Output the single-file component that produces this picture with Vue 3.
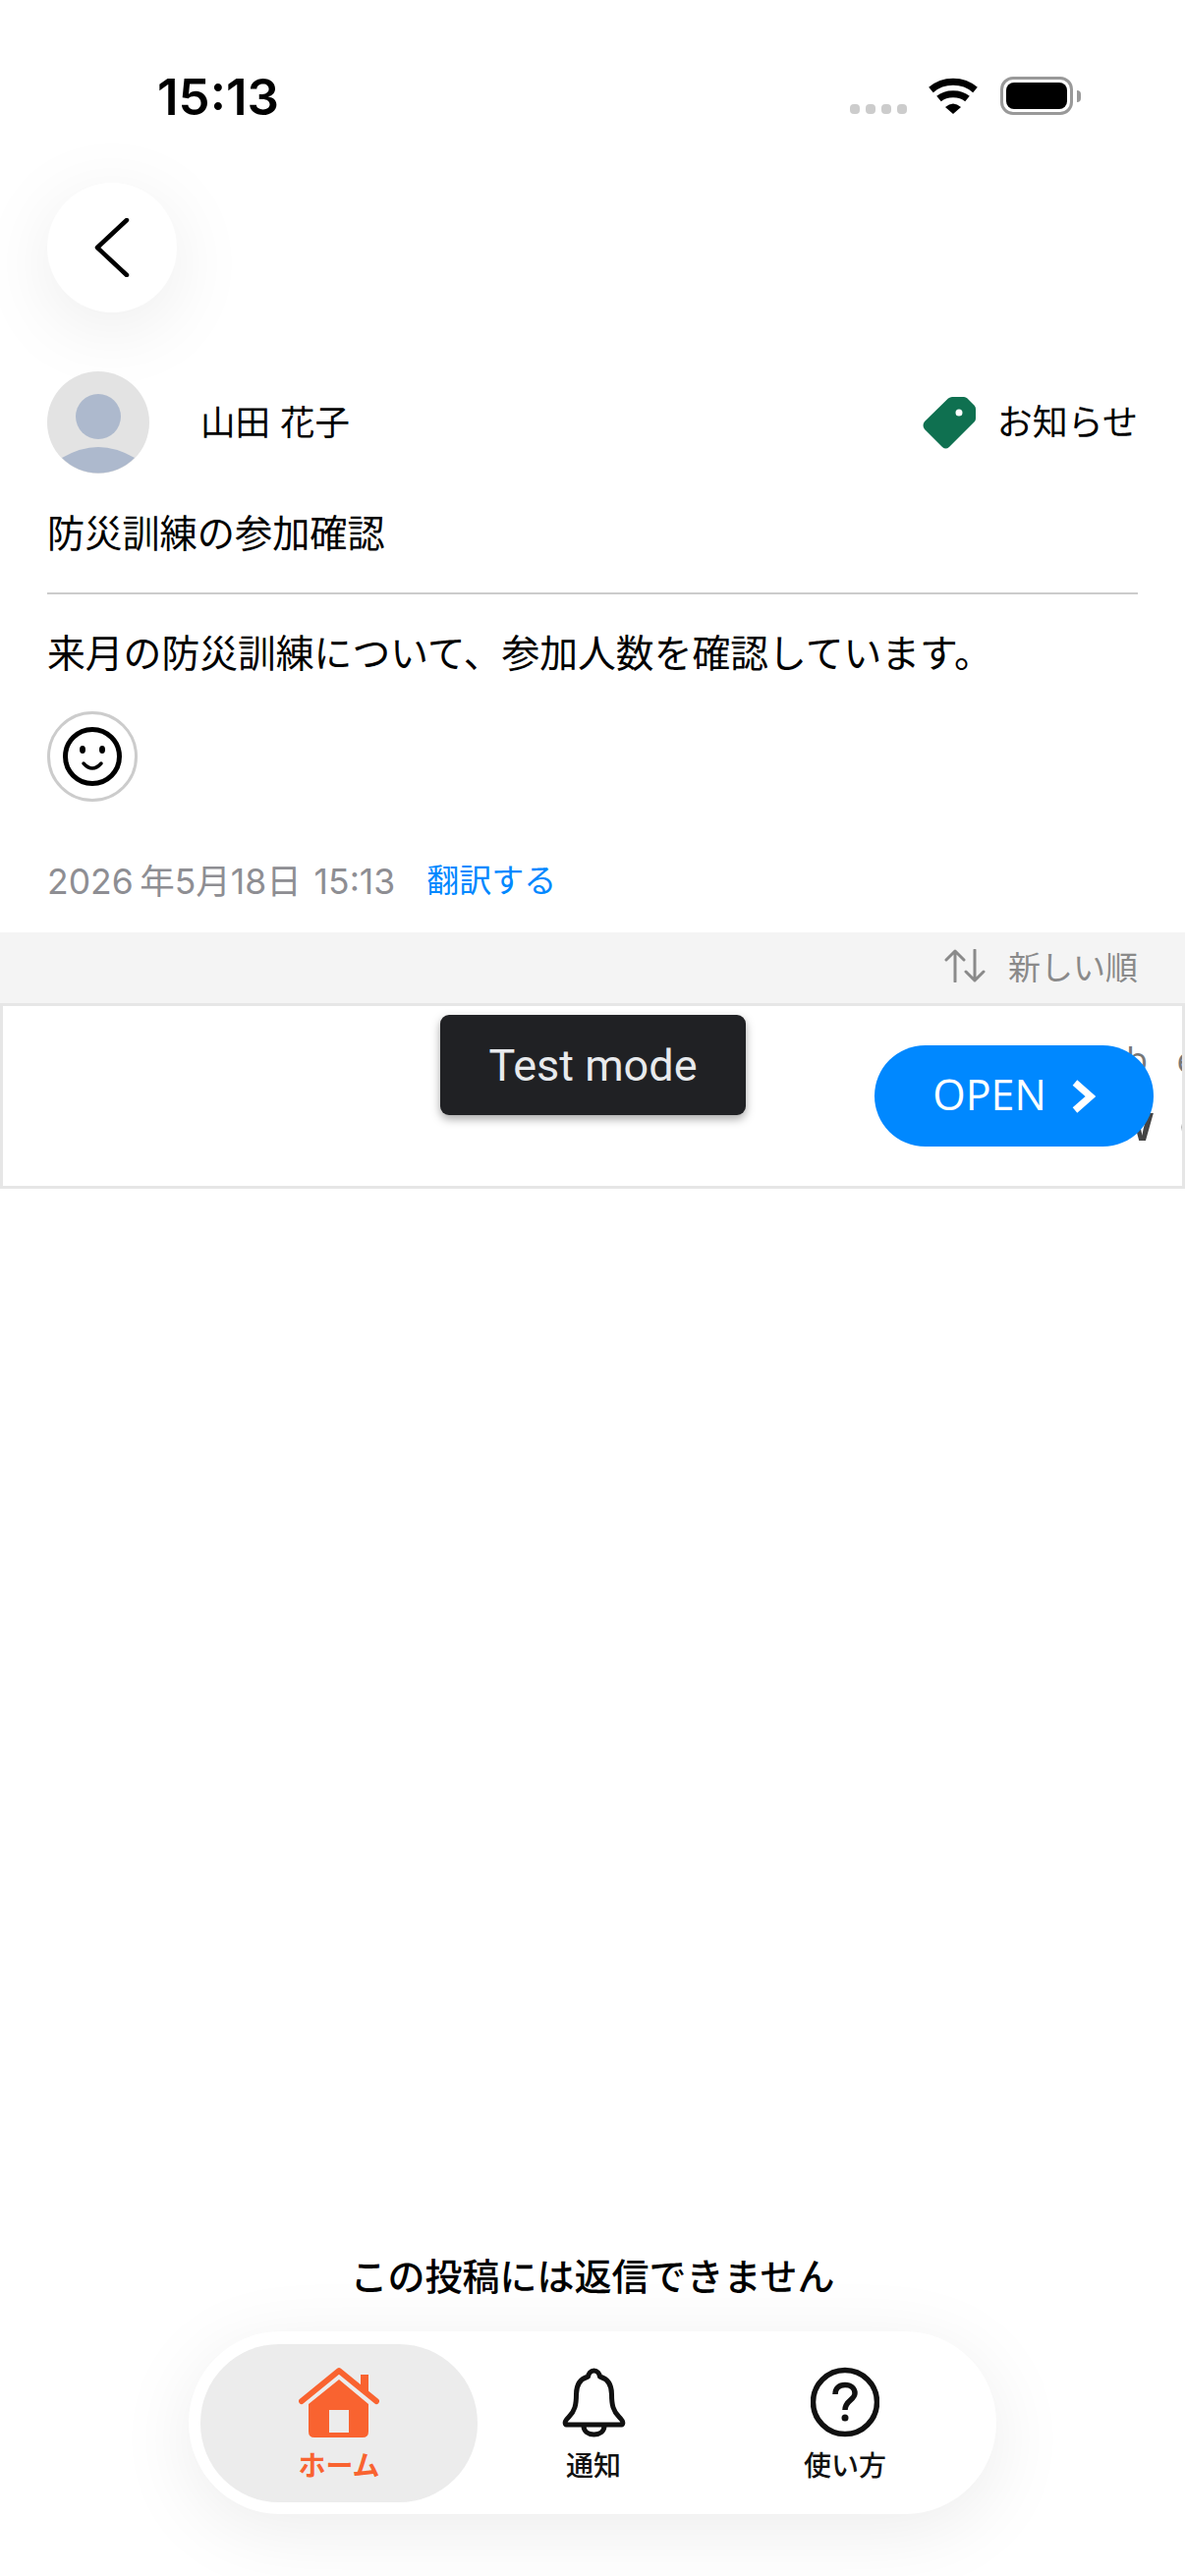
<script setup>
const navItems = [
  { key: 'home', label: 'ホーム', active: true },
  { key: 'bell', label: '通知', active: false },
  { key: 'help', label: '使い方', active: false },
]
</script>

<template>
  <div class="page">
    <div class="status-bar">
      <span class="time">15:13</span>
      <div class="status-icons">
        <div class="signal"><i></i><i></i><i></i><i></i></div>
        <svg class="wifi" width="50" height="37" viewBox="0 0 50 37">
          <path d="M2.500 12.500C15 1.500 35 1.500 47.500 12.500" fill="none" stroke="#000" stroke-width="7" />
          <path d="M10.500 21.500C18 15 32 15 39.500 21.500" fill="none" stroke="#000" stroke-width="7" />
          <path d="M17 30Q25 23 33 30L25 37Z" fill="#000" />
        </svg>
        <div class="battery"><div class="battery-fill"></div></div>
        <div class="battery-nub"></div>
      </div>
    </div>

    <button class="back">
      <svg width="36" height="60" viewBox="0 0 36 60">
        <path d="M33 2L3 30L33 58" fill="none" stroke="#000" stroke-width="4.500" stroke-linecap="round" stroke-linejoin="round" />
      </svg>
    </button>

    <div class="post-head">
      <div class="avatar">
        <svg width="104" height="104" viewBox="0 0 104 104">
          <circle cx="52" cy="52" r="52" fill="#e3e3e3" />
          <circle cx="52" cy="46" r="23" fill="#adb9cd" />
          <path d="M15 88Q34 77 52 77Q70 77 89 88A52 52 0 0 1 15 88Z" fill="#adb9cd" />
        </svg>
      </div>
      <span class="name">山田 花子</span>
      <div class="category">
        <svg width="54" height="54" viewBox="0 0 54 54">
          <path fill-rule="evenodd" fill="#0f7050" d="M2 26L26 2.500Q28 1 30 1L42 1Q44 1 45.500 2.500L52.500 9.500Q54 11 54 13L54 23Q54 25 52.500 26.500L27 52Q23.500 55 20 52L2 34Q-1 30 2 26ZM37 13.500A3.500 3.500 0 1 0 37 20.500A3.500 3.500 0 1 0 37 13.500Z" />
        </svg>
        <span>お知らせ</span>
      </div>
    </div>

    <h1 class="title">防災訓練の参加確認</h1>
    <div class="divider"></div>
    <p class="body">来月の防災訓練について、参加人数を確認しています。</p>

    <div class="reaction">
      <svg width="60" height="60" viewBox="0 0 60 60">
        <circle cx="30" cy="30" r="27.500" fill="none" stroke="#000" stroke-width="5" />
        <ellipse cx="20" cy="23" rx="3" ry="4" fill="#000" />
        <ellipse cx="40" cy="23" rx="3" ry="4" fill="#000" />
        <path d="M21 37Q30 47 39 37" fill="none" stroke="#000" stroke-width="3.500" stroke-linecap="round" />
      </svg>
    </div>

    <div class="meta">
      <span class="date">2026&#8201;年5月18日 15:13</span>
      <span class="translate">翻訳する</span>
    </div>

    <div class="sort-bar">
      <svg width="42" height="34" viewBox="0 0 42 34">
        <path d="M11 33V2M2 11L11 2L20 11M31 1V32M22 23L31 32L40 23" fill="none" stroke="#8a8a8a" stroke-width="3" stroke-linecap="round" stroke-linejoin="round" />
      </svg>
      <span>新しい順</span>
    </div>

    <div class="ad">
      <div class="ad-peek">
        <span class="peek-top">b e</span>
        <span class="peek-bottom">w c</span>
      </div>
      <div class="test-mode">Test mode</div>
      <div class="open">
        <span>OPEN</span>
        <svg width="24" height="34" viewBox="0 0 24 34">
          <path d="M3 3L19 17L3 31" fill="none" stroke="#fff" stroke-width="7" />
        </svg>
      </div>
    </div>

    <div class="spacer"></div>

    <div class="footer">
      <p class="no-reply">この投稿には返信できません</p>
      <nav class="tabs">
        <div v-for="item in navItems" :key="item.key" :class="['tab', { active: item.active }]">
          <svg v-if="item.key === 'home'" width="82" height="72" viewBox="0 0 82 72">
            <rect x="63" y="8" width="8" height="18" fill="#f96330" />
            <path d="M3 35L41 4L79 35" fill="none" stroke="#f96330" stroke-width="6" stroke-linecap="round" stroke-linejoin="round" />
            <path fill-rule="evenodd" fill="#f96330" d="M41 13L71 38V66Q71 72 65 72H16Q10 72 10 66V38ZM31 44V67H51V44Z" />
          </svg>
          <svg v-else-if="item.key === 'bell'" width="65" height="70" viewBox="0 0 65 70">
            <path d="M32.500 3C36 3 38 6 38.500 9C47 11.500 50.500 18 50.500 27C50.500 38 52 44 58 50C61 53 63 56 61 58H4C2 56 4 53 7 50C13 44 14.500 38 14.500 27C14.500 18 18 11.500 26.500 9C27 6 29 3 32.500 3Z" fill="none" stroke="#111" stroke-width="5" stroke-linejoin="round" />
            <path d="M22 59C22 65 27 68 32.500 68C38 68 43 65 43 59" fill="none" stroke="#111" stroke-width="5" />
          </svg>
          <svg v-else width="70" height="70" viewBox="0 0 70 70">
            <circle cx="35" cy="35" r="32.500" fill="none" stroke="#111" stroke-width="5.500" />
            <path d="M25 27C25 21 29 17.500 35 17.500C41 17.500 45 21 45 26C45 33 35 33 35 43" fill="none" stroke="#111" stroke-width="5.500" />
            <circle cx="35" cy="51" r="3.500" fill="#111" />
          </svg>
          <span>{{ item.label }}</span>
        </div>
      </nav>
    </div>
  </div>
</template>

<style>
body {
  background: #fff;
}
</style>

<style scoped>
.page {
  width: 1206px;
  height: 2622px;
  display: flex;
  flex-direction: column;
  overflow: hidden;
  background: #fff;
  color: #000;
  font-family: Inter, "Noto Sans CJK JP", sans-serif;
}

.status-bar {
  height: 186px;
  flex: none;
  display: flex;
  justify-content: space-between;
  align-items: flex-start;
  padding: 0 106px 0 160px;
  box-sizing: border-box;
}

.time {
  margin-top: 69px;
  font-size: 51px;
  line-height: 60px;
  font-weight: 600;
}

.status-icons {
  margin-top: 78px;
  display: flex;
  align-items: flex-start;
}

.signal {
  display: flex;
  gap: 6px;
  margin-top: 28px;
  margin-right: 22px;
}

.signal i {
  display: block;
  width: 10px;
  height: 10px;
  border-radius: 4px;
  background: #ccc;
}

.wifi {
  margin-top: 1px;
  margin-right: 23px;
}

.battery {
  width: 74px;
  height: 39px;
  box-sizing: border-box;
  border: 3px solid #999;
  border-radius: 13px;
  padding: 3px;
}

.battery-fill {
  height: 100%;
  background: #000;
  border-radius: 8px;
}

.battery-nub {
  width: 4px;
  height: 12px;
  margin: 14px 0 0 4px;
  background: #999;
  border-radius: 0 4px 4px 0;
}

.back {
  flex: none;
  width: 132px;
  height: 132px;
  margin-left: 48px;
  padding: 0;
  border: 0;
  border-radius: 50%;
  background: #fff;
  box-shadow: 0 16px 80px rgba(0, 0, 0, 0.08);
  display: flex;
  align-items: center;
  justify-content: center;
}

.post-head {
  flex: none;
  margin-top: 60px;
  padding: 0 48px;
  display: flex;
  align-items: center;
  height: 104px;
}

.avatar {
  width: 104px;
  height: 104px;
  flex: none;
}

.avatar svg {
  display: block;
}

.name {
  margin: 0 0 6px 52px;
  font-size: 35.500px;
  font-weight: 400;
}

.category {
  margin-left: auto;
  display: flex;
  align-items: center;
  gap: 22px;
  font-size: 36px;
}

.category span {
  margin-bottom: 6px;
}

.title {
  flex: none;
  margin: 36px 0 0;
  padding: 0 48px;
  font-size: 38.200px;
  line-height: 50px;
  font-weight: 400;
}

.divider {
  flex: none;
  margin: 35px 48px 0;
  height: 2px;
  background: #ccc;
}

.body {
  flex: none;
  margin: 35px 0 0;
  padding: 0 48px;
  font-size: 38.800px;
  line-height: 50px;
}

.reaction {
  flex: none;
  width: 92px;
  height: 92px;
  margin: 34px 0 0 48px;
  box-sizing: border-box;
  border: 3px solid #ccc;
  border-radius: 50%;
  display: flex;
  align-items: center;
  justify-content: center;
}

.meta {
  flex: none;
  margin-top: 55px;
  padding: 0 48px;
  display: flex;
  align-items: center;
  gap: 32px;
  height: 46px;
}

.date {
  font-size: 35.500px;
  word-spacing: 3px;
  color: #8e8e93;
}

.translate {
  font-size: 33px;
  color: #0088ff;
}

.sort-bar {
  flex: none;
  margin-top: 32px;
  height: 72px;
  padding: 0 48px 5px;
  box-sizing: border-box;
  background: #f4f4f4;
  display: flex;
  align-items: center;
  justify-content: flex-end;
  gap: 23px;
  font-size: 33px;
  color: #8a8a8a;
}

.ad {
  flex: none;
  position: relative;
  height: 189px;
  box-sizing: border-box;
  border: 3px solid #e6e6e6;
  overflow: hidden;
  background: #fff;
}

.ad-peek {
  position: absolute;
  left: 1143px;
  top: 31px;
  display: flex;
  flex-direction: column;
  white-space: nowrap;
  font-family: "Open Sans", sans-serif;
}

.peek-top {
  font-size: 36px;
  line-height: 48px;
  word-spacing: 20px;
  color: #777;
}

.peek-bottom {
  margin: 13px 0 0 -14px;
  font-size: 52px;
  line-height: 50px;
  font-weight: 600;
  word-spacing: 12px;
  color: #444;
}

.test-mode {
  position: absolute;
  left: 445px;
  top: 9px;
  width: 311px;
  height: 102px;
  border-radius: 9px;
  background: #202124;
  color: #e8eaed;
  font-family: Roboto, sans-serif;
  font-size: 45px;
  display: flex;
  align-items: center;
  justify-content: center;
  box-shadow: 0 4px 10px rgba(0, 0, 0, 0.35);
}

.open {
  position: absolute;
  left: 887px;
  top: 40px;
  width: 284px;
  height: 103px;
  border-radius: 52px;
  background: #0088ff;
  color: #fff;
  font-family: "Open Sans", sans-serif;
  font-size: 43px;
  display: flex;
  align-items: center;
  justify-content: center;
  gap: 26px;
}

.open span {
  margin-bottom: 4px;
}

.spacer {
  flex: 1;
}

.footer {
  flex: none;
  display: flex;
  flex-direction: column;
  align-items: center;
  padding-bottom: 63px;
}

.no-reply {
  margin: 0 0 31px;
  font-size: 38px;
  line-height: 50px;
  font-weight: 500;
}

.tabs {
  width: 822px;
  height: 186px;
  box-sizing: border-box;
  padding: 13px 12px 12px;
  display: grid;
  grid-template-columns: 282px 236px 276px;
  background: #fff;
  border-radius: 93px;
  box-shadow: 0 16px 80px rgba(0, 0, 0, 0.08);
}

.tab {
  display: flex;
  flex-direction: column;
  align-items: center;
  justify-content: flex-start;
  padding-top: 23px;
  border-radius: 80px;
  font-size: 28px;
  font-weight: 500;
  color: #111;
}

.tab svg {
  display: block;
  height: 72px;
}

.tab span {
  margin-top: 9px;
  line-height: 40px;
}

.tab.active {
  background: #ececec;
  color: #f96330;
  font-weight: 700;
}
</style>
